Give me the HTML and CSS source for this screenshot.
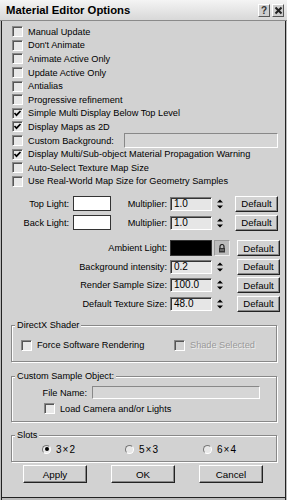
FILE: index.html
```html
<!DOCTYPE html>
<html lang="en">
<head>
    <meta charset="UTF-8">
    <title>Material Editor Options</title>
    <link rel="stylesheet" href="styles.css">
</head>
<body>
    <div class="window">
        <div class="titlebar">
            <span class="title">Material Editor Options</span>
            <span class="tbtns">
                <span class="tbtn">?</span>
                <span class="tbtn">
                    <svg width="9" height="9" viewBox="0 0 9 9"><path d="M1.5 1.5 L7.5 7.5 M7.5 1.5 L1.5 7.5" stroke="#222" stroke-width="2"/></svg>
                </span>
            </span>
        </div>

        <div class="checks">
            <div class="check-row"><span class="box"></span>Manual Update</div>
            <div class="check-row"><span class="box"></span>Don't Animate</div>
            <div class="check-row"><span class="box"></span>Animate Active Only</div>
            <div class="check-row"><span class="box"></span>Update Active Only</div>
            <div class="check-row"><span class="box"></span>Antialias</div>
            <div class="check-row"><span class="box"></span>Progressive refinement</div>
            <div class="check-row"><span class="box checked"><svg width="9" height="9" viewBox="0 0 9 9"><path d="M1.5 4 L3.5 6.2 L7.5 2" fill="none" stroke="#000" stroke-width="1.7"/></svg></span>Simple Multi Display Below Top Level</div>
            <div class="check-row"><span class="box checked"><svg width="9" height="9" viewBox="0 0 9 9"><path d="M1.5 4 L3.5 6.2 L7.5 2" fill="none" stroke="#000" stroke-width="1.7"/></svg></span>Display Maps as 2D</div>
            <div class="check-row"><span class="box"></span><span class="grow">Custom Background:</span><span class="bg-field"></span></div>
            <div class="check-row"><span class="box checked"><svg width="9" height="9" viewBox="0 0 9 9"><path d="M1.5 4 L3.5 6.2 L7.5 2" fill="none" stroke="#000" stroke-width="1.7"/></svg></span>Display Multi/Sub-object Material Propagation Warning</div>
            <div class="check-row"><span class="box"></span>Auto-Select Texture Map Size</div>
            <div class="check-row"><span class="box"></span>Use Real-World Map Size for Geometry Samples</div>
        </div>

        <div class="lights">
            <div class="light-row">
                <span class="light-label">Top Light:</span>
                <span class="swatch white"></span>
                <span class="mult-label">Multiplier:</span>
                <span class="field">1.0</span>
                <span class="slot"><span class="spinner"><svg width="8" height="14" viewBox="0 0 8 14"><path d="M1 5.5 L4 2.5 L7 5.5Z M1 8.5 L4 11.5 L7 8.5Z" fill="#000"/></svg></span></span>
                <span class="btn small">Default</span>
            </div>
            <div class="light-row">
                <span class="light-label">Back Light:</span>
                <span class="swatch white"></span>
                <span class="mult-label">Multiplier:</span>
                <span class="field">1.0</span>
                <span class="slot"><span class="spinner"><svg width="8" height="14" viewBox="0 0 8 14"><path d="M1 5.5 L4 2.5 L7 5.5Z M1 8.5 L4 11.5 L7 8.5Z" fill="#000"/></svg></span></span>
                <span class="btn small">Default</span>
            </div>
        </div>

        <div class="settings">
            <div class="set-row">
                <span class="set-label">Ambient Light:</span>
                <span class="swatch black"></span>
                <span class="slot"><span class="lock"><svg width="8" height="9" viewBox="0 0 8 9"><path d="M2 4 V2.5 A2 2 0 0 1 6 2.5 V4" fill="none" stroke="#222" stroke-width="1.2"/><rect x="1" y="4" width="6" height="4.5" fill="#333"/><rect x="2" y="5.5" width="4" height="1" fill="#999"/></svg></span></span>
                <span class="btn small">Default</span>
            </div>
            <div class="set-row">
                <span class="set-label">Background intensity:</span>
                <span class="field">0.2</span>
                <span class="slot"><span class="spinner"><svg width="8" height="14" viewBox="0 0 8 14"><path d="M1 5.5 L4 2.5 L7 5.5Z M1 8.5 L4 11.5 L7 8.5Z" fill="#000"/></svg></span></span>
                <span class="btn small">Default</span>
            </div>
            <div class="set-row">
                <span class="set-label">Render Sample Size:</span>
                <span class="field">100.0</span>
                <span class="slot"><span class="spinner"><svg width="8" height="14" viewBox="0 0 8 14"><path d="M1 5.5 L4 2.5 L7 5.5Z M1 8.5 L4 11.5 L7 8.5Z" fill="#000"/></svg></span></span>
                <span class="btn small">Default</span>
            </div>
            <div class="set-row">
                <span class="set-label">Default Texture Size:</span>
                <span class="field">48.0</span>
                <span class="slot"><span class="spinner"><svg width="8" height="14" viewBox="0 0 8 14"><path d="M1 5.5 L4 2.5 L7 5.5Z M1 8.5 L4 11.5 L7 8.5Z" fill="#000"/></svg></span></span>
                <span class="btn small">Default</span>
            </div>
        </div>

        <fieldset class="group directx">
            <legend>DirectX Shader</legend>
            <div class="dx-row">
                <span class="dx-item"><span class="box"></span>Force Software Rendering</span>
                <span class="dx-item disabled"><span class="box"></span>Shade Selected</span>
            </div>
        </fieldset>

        <fieldset class="group sample">
            <legend>Custom Sample Object:</legend>
            <div class="file-row">
                <span class="file-label">File Name:</span>
                <span class="file-field"></span>
            </div>
            <div class="check-row load"><span class="box"></span>Load Camera and/or Lights</div>
        </fieldset>

        <fieldset class="group slots">
            <legend>Slots</legend>
            <div class="radio-row">
                <span class="radio-item r1"><span class="radio on"></span>3×2</span>
                <span class="radio-item r2"><span class="radio"></span>5×3</span>
                <span class="radio-item r3"><span class="radio"></span>6×4</span>
            </div>
        </fieldset>

        <div class="actions">
            <span class="btn big">Apply</span>
            <span class="btn big">OK</span>
            <span class="btn big">Cancel</span>
        </div>
    </div>
</body>
</html>
```

FILE: styles.css
```css
body {
    margin: 0;
    background-color: #c8c8c8;
    font-family: "Liberation Sans", Arial, sans-serif;
    font-size: 9.2px;
    color: #000;
}
.window {
    width: 287px;
    height: 500px;
    box-sizing: border-box;
    background-color: #d2d2d2;
    box-shadow: inset 1px 0 #bbb, inset 2px 0 #222, inset -1px 0 #bbb, inset -2px 0 #222, inset 0 -2px #bbb, inset 0 -3px #222;
    overflow: hidden;
}
.titlebar {
    height: 20px;
    display: flex;
    align-items: center;
    justify-content: space-between;
    padding: 0 3px 0 6px;
    background: linear-gradient(to bottom, #f4f4f4, #d8d8d8);
    border-bottom: 1px solid #8a8a8a;
}
.title {
    font-size: 11.3px;
    font-weight: bold;
}
.tbtns {
    display: flex;
    gap: 2px;
}
.tbtn {
    width: 12px;
    height: 13px;
    box-sizing: border-box;
    display: flex;
    align-items: center;
    justify-content: center;
    background-color: #cfcfcf;
    border: 1px solid #fff;
    border-right-color: #555;
    border-bottom-color: #555;
    font-weight: bold;
    font-size: 10px;
    color: #333;
}

/* checkbox list */
.checks {
    padding: 4px 0 0 12px;
}
.check-row {
    height: 13.6px;
    display: flex;
    align-items: center;
    white-space: nowrap;
}
.box {
    width: 11px;
    height: 11px;
    box-sizing: border-box;
    flex: none;
    margin-right: 5px;
    display: flex;
    align-items: center;
    justify-content: center;
    background-color: #e8e8e8;
    border: 1px solid #888;
    border-right-color: #fff;
    border-bottom-color: #fff;
    box-shadow: inset 1px 1px #555;
}
.grow {
    width: 96px;
}
.bg-field {
    width: 154px;
    height: 15px;
    box-sizing: border-box;
    background-color: #d6d6d6;
    border: 1px solid #888;
    border-right-color: #fff;
    border-bottom-color: #fff;
}

/* lights */
.lights {
    margin-top: 8px;
    display: flex;
    flex-direction: column;
    gap: 4px;
}
.light-row, .set-row {
    height: 15px;
    display: flex;
    align-items: center;
}
.light-label {
    width: 69px;
    text-align: right;
}
.swatch {
    width: 38px;
    height: 15px;
    box-sizing: border-box;
    border: 1px solid #333;
}
.light-row .swatch {
    margin-left: 4px;
}
.swatch.white {
    background-color: #fff;
}
.swatch.black {
    background-color: #000;
    width: 42px;
    height: 16px;
}
.mult-label {
    width: 56px;
    text-align: right;
}
.field {
    width: 42px;
    height: 14px;
    margin-left: 3px;
    box-sizing: border-box;
    padding-left: 3px;
    line-height: 12px;
    font-size: 10px;
    background-color: #e6e6e6;
    border: 1px solid #777;
    border-right-color: #fff;
    border-bottom-color: #fff;
    box-shadow: inset 1px 1px #333;
}
.slot {
    width: 23px;
    display: flex;
}
.spinner {
    margin-left: 4px;
    width: 8px;
    height: 14px;
    display: flex;
}
.lock {
    margin-left: 2px;
    width: 16px;
    height: 16px;
    box-sizing: border-box;
    display: flex;
    align-items: center;
    justify-content: center;
    background-color: #bcbcbc;
    border: 1px solid #999;
    border-right-color: #eee;
    border-bottom-color: #eee;
}
.btn {
    box-sizing: border-box;
    display: flex;
    align-items: center;
    justify-content: center;
    background-color: #d2d2d2;
    border: 1px solid #fff;
    border-right-color: #222;
    border-bottom-color: #222;
    box-shadow: inset -1px -1px #888;
}
.btn.small {
    width: 43px;
    height: 16px;
    font-size: 9.6px;
}

/* settings */
.settings {
    margin-top: 10px;
    display: flex;
    flex-direction: column;
    gap: 2.5px;
}
.set-row {
    height: 16px;
}
.set-label {
    width: 167px;
    text-align: right;
}
.set-row .swatch {
    margin-left: 3px;
}
.set-row .slot {
    width: 25px;
}

/* groups */
.group {
    margin: 0 0 0 11px;
    width: 266px;
    box-sizing: border-box;
    padding: 0;
    border: 1px solid #888;
    box-shadow: inset 1px 1px #fff, 1px 1px #fff;
    min-inline-size: 0;
}
.group legend {
    margin-left: 3px;
    padding: 0 2px;
    background-color: #d2d2d2;
    line-height: 11px;
}
.directx {
    margin-top: 8px;
    height: 42px;
}
.dx-row {
    display: flex;
    padding: 9px 0 0 9px;
}
.dx-item {
    display: flex;
    align-items: center;
    height: 11px;
}
.dx-item:first-child {
    width: 153px;
}
.dx-item.disabled {
    color: #999;
    text-shadow: 1px 1px #eee;
}
.dx-item.disabled .box {
    background-color: #d2d2d2;
}
.sample {
    margin-top: 9.5px;
    height: 51px;
}
.file-row {
    display: flex;
    align-items: center;
    height: 13px;
    margin-top: 4px;
}
.file-label {
    width: 75px;
    text-align: right;
}
.file-field {
    margin-left: 5px;
    width: 168px;
    height: 13px;
    box-sizing: border-box;
    background-color: #d6d6d6;
    border: 1px solid #888;
    border-right-color: #fff;
    border-bottom-color: #fff;
}
.check-row.load {
    margin: 3px 0 0 32px;
}
.slots {
    margin-top: 8px;
    height: 32px;
}
.radio-row {
    display: flex;
    height: 14px;
    align-items: center;
    margin-top: 1px;
    font-size: 10px;
    letter-spacing: 1px;
}
.radio-item {
    display: flex;
    align-items: center;
}
.r1 {
    margin-left: 30px;
    width: 83px;
}
.r2 {
    width: 78px;
}
.radio {
    width: 9px;
    height: 9px;
    box-sizing: border-box;
    margin-right: 5px;
    border-radius: 50%;
    background-color: #e8e8e8;
    border: 1px solid #777;
    border-right-color: #fff;
    border-bottom-color: #fff;
    display: flex;
    align-items: center;
    justify-content: center;
}
.radio.on::after {
    content: "";
    width: 4px;
    height: 4px;
    border-radius: 50%;
    background-color: #000;
}

/* bottom buttons */
.actions {
    display: flex;
    gap: 24px;
    margin: 3px 0 0 23px;
}
.btn.big {
    width: 64px;
    height: 18px;
    font-size: 9.8px;
}
```
